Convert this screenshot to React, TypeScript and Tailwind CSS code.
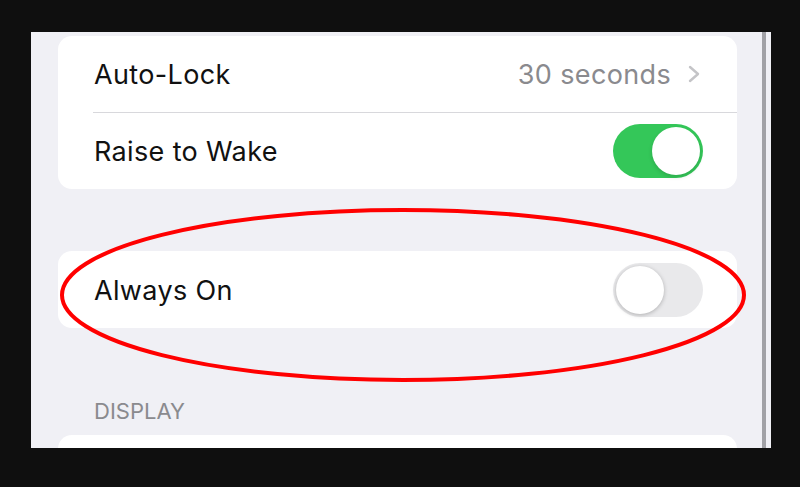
import * as React from 'react'

function Toggle({ on }: { on: boolean }) {
  return (
    <div
      className={
        on
          ? 'relative h-[54px] w-[90px] rounded-full bg-[#34c759]'
          : 'relative h-[54px] w-[90px] rounded-full bg-[#e9e9eb]'
      }
    >
      <div
        className={
          on
            ? 'absolute right-[3px] top-[3px] h-[48px] w-[48px] rounded-full bg-white shadow-[0_2px_4px_rgba(0,0,0,0.15)]'
            : 'absolute left-[3px] top-[3px] h-[48px] w-[48px] rounded-full bg-white shadow-[0_1px_4px_rgba(0,0,0,0.25)]'
        }
      />
    </div>
  )
}

function Chevron() {
  return (
    <svg width="14" height="18" viewBox="0 0 14 18" fill="none">
      <path d="M3 2l8 7-8 7" stroke="#c4c4c7" strokeWidth="2.4" strokeLinecap="round" strokeLinejoin="round" />
    </svg>
  )
}

export default function App() {
  return (
    <div
      className="relative h-[487px] w-[800px] overflow-hidden bg-[#0f0f0f] pl-[31px] pt-[32px]"
      style={{ fontFamily: 'Inter, "Noto Sans", sans-serif' }}
    >
      <div className="flex h-[416px] w-[740px] overflow-hidden bg-[#f0f0f5]">
        <div className="flex-1 pl-[27px] pr-[25px] pt-[4px]">
          <div className="rounded-[14px] bg-white">
            <div className="flex h-[76px] items-center pl-[36px] pr-[36px]">
              <span className="flex-1 pt-[3px] text-[27px] tracking-[0.35px] text-[#111]">Auto-Lock</span>
              <span className="mr-[16px] pt-[3px] text-[27px] tracking-[0.35px] text-[#8a8a8e]">30 seconds</span>
              <Chevron />
            </div>
            <div className="ml-[35px] h-px bg-[#d8d8dc]" />
            <div className="flex h-[76px] items-center pl-[36px] pr-[34px]">
              <span className="flex-1 pt-[3px] text-[27px] tracking-[0.35px] text-[#111]">Raise to Wake</span>
              <Toggle on />
            </div>
          </div>

          <div className="mt-[62px] flex h-[77px] items-center rounded-[14px] bg-white pl-[36px] pr-[34px]">
            <span className="flex-1 pt-[3px] text-[27px] tracking-[0.35px] text-[#111]">Always On</span>
            <Toggle on={false} />
          </div>

          <div className="pl-[36px] pt-[70px] text-[22px] leading-[26px] text-[#8a8a8e]">DISPLAY</div>
          <div className="mt-[11px] h-[60px] rounded-[14px] bg-white" />
        </div>
        <div className="w-[4px] bg-[#a1a1a6]" />
        <div className="w-[5px] bg-[#f0f0f5]" />
      </div>

      <svg className="pointer-events-none absolute left-0 top-0" width="800" height="487">
        <ellipse cx="403" cy="295" rx="341" ry="85" fill="none" stroke="#ff0000" strokeWidth="4" />
      </svg>
    </div>
  )
}
